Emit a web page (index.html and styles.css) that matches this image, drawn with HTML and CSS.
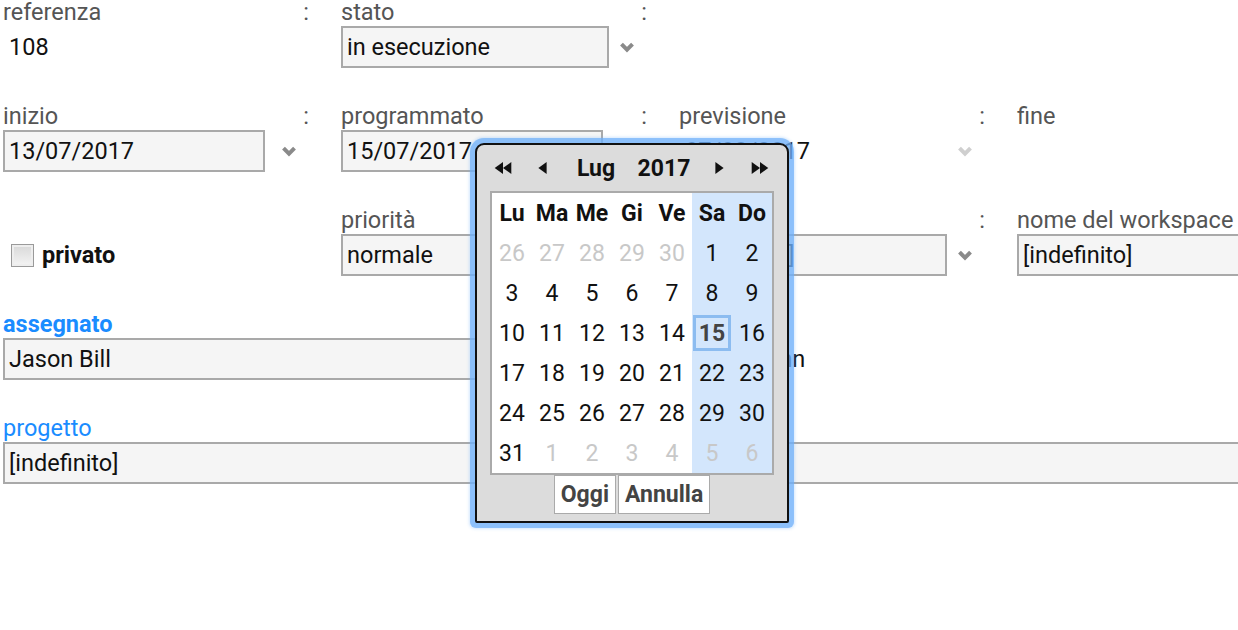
FILE: index.html
```html
<!DOCTYPE html>
<html lang="it">
<head>
    <meta charset="UTF-8">
    <meta name="viewport" content="width=device-width, initial-scale=1.0">
    <title>Attività</title>
    <link rel="stylesheet" href="styles.css">
</head>
<body>
    <div class="page">
        <div class="form">
            <!-- riga 1 -->
            <div class="field">
                <div class="field-head"><span class="label">referenza</span><span class="colon">:</span></div>
                <div class="field-body"><span class="value">108</span></div>
            </div>
            <div class="field">
                <div class="field-head"><span class="label">stato</span><span class="colon">:</span></div>
                <div class="field-body">
                    <div class="box select">in esecuzione</div>
                    <svg class="chev" viewBox="0 0 14 10"><polyline points="2,2 7,7 12,2"/></svg>
                </div>
            </div>
            <div class="field"></div>
            <div class="field"></div>

            <!-- riga 2 -->
            <div class="field">
                <div class="field-head"><span class="label">inizio</span><span class="colon">:</span></div>
                <div class="field-body">
                    <div class="box">13/07/2017</div>
                    <svg class="chev" viewBox="0 0 14 10"><polyline points="2,2 7,7 12,2"/></svg>
                </div>
            </div>
            <div class="field">
                <div class="field-head"><span class="label">programmato</span><span class="colon">:</span></div>
                <div class="field-body">
                    <div class="box">15/07/2017</div>
                    <svg class="chev" viewBox="0 0 14 10"><polyline points="2,2 7,7 12,2"/></svg>
                </div>
            </div>
            <div class="field">
                <div class="field-head"><span class="label">previsione</span><span class="colon">:</span></div>
                <div class="field-body">
                    <span class="value">07/08/2017</span>
                    <svg class="chev off" viewBox="0 0 14 10"><polyline points="2,2 7,7 12,2"/></svg>
                </div>
            </div>
            <div class="field">
                <div class="field-head"><span class="label">fine</span></div>
                <div class="field-body"></div>
            </div>

            <!-- riga 3 -->
            <div class="field">
                <div class="field-head"></div>
                <div class="field-body">
                    <label class="check"><span class="checkbox"></span>privato</label>
                </div>
            </div>
            <div class="field">
                <div class="field-head"><span class="label">priorità</span><span class="colon">:</span></div>
                <div class="field-body">
                    <div class="box select">normale</div>
                    <svg class="chev" viewBox="0 0 14 10"><polyline points="2,2 7,7 12,2"/></svg>
                </div>
            </div>
            <div class="field">
                <div class="field-head"><span class="label">tipo</span><span class="colon">:</span></div>
                <div class="field-body">
                    <div class="box select">[indefinito]</div>
                    <svg class="chev" viewBox="0 0 14 10"><polyline points="2,2 7,7 12,2"/></svg>
                </div>
            </div>
            <div class="field">
                <div class="field-head"><span class="label">nome del workspace</span></div>
                <div class="field-body wide">
                    <div class="box full">[indefinito]</div>
                </div>
            </div>

            <!-- riga 4 -->
            <div class="field span2">
                <div class="field-head"><span class="label link bold">assegnato</span></div>
                <div class="field-body wide">
                    <div class="box half">Jason Bill</div>
                </div>
            </div>
            <div class="field">
                <div class="field-head"><span class="label">autore</span></div>
                <div class="field-body"><span class="value">Peter Mann</span></div>
            </div>
            <div class="field"></div>

            <!-- riga 5 -->
            <div class="field span4">
                <div class="field-head"><span class="label link">progetto</span></div>
                <div class="field-body wide">
                    <div class="box full">[indefinito]</div>
                </div>
            </div>
        </div>

        <!-- calendario aperto sopra "programmato" -->
        <div class="picker">
            <div class="picker-head">
                <svg class="arr dbl" viewBox="0 0 18 13"><polygon points="9,0 0,6.5 9,13"/><polygon points="18,0 9,6.5 18,13"/></svg>
                <svg class="arr" viewBox="0 0 9 13"><polygon points="9,0 0,6.5 9,13"/></svg>
                <span class="title">Lug</span>
                <span class="title">2017</span>
                <svg class="arr" viewBox="0 0 9 13"><polygon points="0,0 9,6.5 0,13"/></svg>
                <svg class="arr dbl" viewBox="0 0 18 13"><polygon points="0,0 9,6.5 0,13"/><polygon points="9,0 18,6.5 9,13"/></svg>
            </div>
            <div class="days">
                <span class="dn">Lu</span><span class="dn">Ma</span><span class="dn">Me</span><span class="dn">Gi</span><span class="dn">Ve</span><span class="dn we">Sa</span><span class="dn we">Do</span>
                <span class="other">26</span><span class="other">27</span><span class="other">28</span><span class="other">29</span><span class="other">30</span><span class="we">1</span><span class="we">2</span>
                <span>3</span><span>4</span><span>5</span><span>6</span><span>7</span><span class="we">8</span><span class="we">9</span>
                <span>10</span><span>11</span><span>12</span><span>13</span><span>14</span><span class="we"><b class="sel">15</b></span><span class="we">16</span>
                <span>17</span><span>18</span><span>19</span><span>20</span><span>21</span><span class="we">22</span><span class="we">23</span>
                <span>24</span><span>25</span><span>26</span><span>27</span><span>28</span><span class="we">29</span><span class="we">30</span>
                <span>31</span><span class="other">1</span><span class="other">2</span><span class="other">3</span><span class="other">4</span><span class="we other">5</span><span class="we other">6</span>
            </div>
            <div class="picker-foot">
                <button class="btn">Oggi</button>
                <button class="btn">Annulla</button>
            </div>
        </div>
    </div>
</body>
</html>
```

FILE: styles.css
```css
html, body {
    margin: 0;
    overflow: hidden;
}

body {
    font-family: Roboto, "Liberation Sans", sans-serif;
    font-size: 23.5px;
    color: #111;
    background: #fff;
}

.page {
    position: relative;
    height: 630px;
    padding-left: 3px;
}

.form {
    display: grid;
    grid-template-columns: repeat(4, 338px);
    row-gap: 36px;
}

.span2 {
    grid-column: span 2;
}

.span4 {
    grid-column: span 4;
}

.field-head {
    display: flex;
    justify-content: space-between;
    width: 306px;
    height: 24px;
    line-height: 24px;
    margin-bottom: 2px;
    white-space: nowrap;
}

.label {
    color: #555;
}

.label.link {
    color: #1a8cff;
}

.bold {
    font-weight: bold;
}

.colon {
    color: #555;
}

.field-body {
    display: flex;
    align-items: center;
    width: 294px;
    height: 42px;
}

.field-body.wide {
    width: auto;
}

.value {
    padding-left: 6px;
    white-space: nowrap;
}

.box {
    box-sizing: border-box;
    width: 262px;
    height: 42px;
    line-height: 38px;
    padding: 0 4px;
    border: 2px solid #a9a9a9;
    background: #f5f5f5;
    white-space: nowrap;
}

.box.select {
    width: 268px;
}

.box.half {
    width: 606px;
}

.box.full {
    width: 1400px;
}

.chev {
    width: 16px;
    height: 11px;
    margin-left: auto;
    fill: none;
    stroke: #8a8a8a;
    stroke-width: 3.6;
}

.chev.off {
    stroke: #cfcfcf;
}

.check {
    display: flex;
    align-items: center;
    font-weight: bold;
    padding-left: 8px;
}

.checkbox {
    box-sizing: border-box;
    width: 23px;
    height: 23px;
    margin-right: 8px;
    border: 1px solid #9a9a9a;
    box-shadow: inset 0 0 0 2px #eee;
    background: linear-gradient(#d8d8d8, #f4f4f4);
}

/* calendario */
.picker {
    position: absolute;
    left: 475px;
    top: 143px;
    box-sizing: border-box;
    width: 314px;
    height: 380px;
    border: 2px solid #111;
    border-radius: 9px 9px 2px 2px;
    background: #dcdcdc;
    box-shadow: 0 0 0 5px rgba(110, 175, 250, 0.7), 0 0 3px 6px rgba(110, 175, 250, 0.3);
    font-size: 23px;
}

.picker-head {
    display: grid;
    grid-template-columns: 52px 26px 82px 54px 56px 26px;
    justify-items: center;
    align-items: center;
    height: 46px;
}

.title {
    font-weight: bold;
    color: #111;
}

.arr {
    width: 9px;
    height: 12px;
    fill: #111;
}

.arr.dbl {
    width: 18px;
}

.days {
    display: grid;
    grid-template-columns: repeat(7, 40px);
    grid-auto-rows: 40px;
    width: 280px;
    margin: 0 13px;
    border: 2px solid #aaa;
    background: #fff;
}

.days span {
    display: flex;
    align-items: center;
    justify-content: center;
    color: #111;
}

.days .dn {
    font-weight: bold;
}

.days .we {
    background: #d3e6fc;
}

.days .other {
    color: #c8c8c8;
}

.sel {
    box-sizing: border-box;
    width: 38px;
    height: 36px;
    border: 3px solid #8cbcf0;
    display: flex;
    align-items: center;
    justify-content: center;
    color: #444;
}

.picker-foot {
    display: flex;
    justify-content: center;
    gap: 2px;
}

.btn {
    height: 39px;
    padding: 0 6px;
    border: 1px solid #aaa;
    background: #fff;
    font-family: Roboto, "Liberation Sans", sans-serif;
    font-size: 23px;
    font-weight: bold;
    color: #444;
}
```
